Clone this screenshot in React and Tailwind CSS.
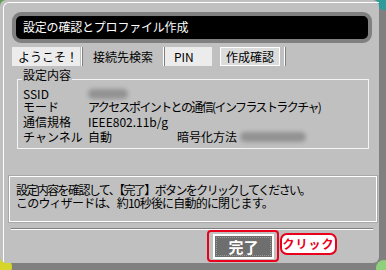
import React from 'react';

const font = "font-['Noto_Sans_CJK_JP','Noto_Sans_CJK_SC',sans-serif]";

const Divider = () => (
  <div className="w-[2px] h-full border-l border-white border-r border-r-[#808080]" />
);

const Blur = ({ w }) => (
  <div className={`h-[10px] ${w} rounded-full bg-[#929292] blur-[2px]`} />
);

export default function App () {
  return (
    <div className={`relative w-[386px] h-[270px] overflow-hidden bg-[#808080] ${font} text-[12px] leading-[12px] text-black`}>
      {/* background bits peeking out at the corners */}
      <div className="absolute -left-[6px] -top-[6px] w-[14px] h-[14px] rounded-full bg-[#5c9e4c]" />
      <div className="absolute -right-[6px] -top-[6px] w-[16px] h-[16px] rounded-full bg-[#2f9c9a]" />
      <div className="absolute -left-[6px] -bottom-[6px] w-[18px] h-[18px] rounded-full bg-[#d6d62a]" />
      <div className="absolute -right-[6px] -bottom-[6px] w-[16px] h-[16px] rounded-full bg-[#8fd07c]" />

      <div className="relative w-[379px] h-[263px] rounded-[6px] bg-[#c0c0c0] pl-[3px] pt-[2px]">
        <div className="h-[260px] border-l border-t border-white rounded-tl-[6px] flex flex-col">
          {/* title bar */}
          <div className="ml-[8px] mt-[9px] w-[360px] h-[31px] rounded-[9px] border-[4px] border-[#808080] bg-black flex items-center pl-[7px]">
            <span className="text-white text-[12px] tracking-[-0.2px]">設定の確認とプロファイル作成</span>
          </div>

          {/* tabs */}
          <div className="ml-[8px] mt-[4px] h-[20px] flex">
            <div className="w-[68px] bg-[#ececec] flex items-center pl-[6px]">ようこそ！</div>
            <div className="w-[1px]" />
            <Divider />
            <div className="w-[1px]" />
            <div className="w-[78px] flex items-center justify-center">接続先検索</div>
            <div className="w-[1px]" />
            <Divider />
            <div className="w-[47px] bg-[#ececec] flex items-center pl-[9px]">PIN</div>
            <div className="w-[8px]" />
            <div className="w-[60px] border border-white bg-[#dcdcdc] flex items-center justify-center">作成確認</div>
            <div className="w-[4px]" />
            <Divider />
          </div>

          {/* settings group */}
          <div className="ml-[13px] mt-[13px] w-[352px] h-[70px] border border-[#f4f4f4]">
            <div className="-mt-[11px] ml-[4px] w-fit px-[1px] h-[12px] bg-[#c0c0c0] flex items-center">設定内容</div>
            <div className="mt-[6px] pl-[5px] flex flex-col">
              <div className="h-[13px] flex items-center">
                <span className="w-[65px]">SSID</span>
                <Blur w="w-[40px]" />
              </div>
              <div className="h-[14px] flex items-center">
                <span className="w-[65px]">モード</span>
                <span className="tracking-[-1.6px]">アクセスポイントとの通信(インフラストラクチャ)</span>
              </div>
              <div className="h-[15px] flex items-center">
                <span className="w-[65px]">通信規格</span>
                <span>IEEE802.11b/g</span>
              </div>
              <div className="h-[16px] flex items-center">
                <span className="w-[65px]">チャンネル</span>
                <span className="w-[89px]">自動</span>
                <span className="w-[63px]">暗号化方法</span>
                <Blur w="w-[66px]" />
              </div>
            </div>
          </div>

          {/* message */}
          <div className="ml-[5px] mt-[27px] w-[368px] h-[47px] border border-white shadow-[0_0_0_1px_#a8a8a8] pl-[6px] pt-[7px] flex flex-col gap-[1px]">
            <div className="h-[12px] tracking-[-1.6px]">設定内容を確認して、【完了】ボタンをクリックしてください。</div>
            <div className="h-[12px] tracking-[-0.8px]">このウィザードは、約10秒後に自動的に閉じます。</div>
          </div>

          {/* separator */}
          <div className="ml-[7px] mt-[6px] w-[362px] border-t border-[#808080] border-b border-b-white" />

          {/* button row */}
          <div className="ml-[203px] flex items-start">
            <div className="w-[72px] h-[32px] rounded-[4px] border-2 border-[#e8001c] pl-[4px] pt-[2px]">
              <div className="w-[61px] h-[25px] border-2 border-white bg-[#6e6e6e] p-[1px]">
                <div className="w-full h-full border border-dotted border-[#9a9a9a] flex items-center justify-center text-white font-bold text-[15px] leading-[15px]">完了</div>
              </div>
            </div>
            <div className="ml-[1px] mt-[3px] w-[57px] h-[22px] rounded-[7px] border-2 border-[#e8001c] bg-white flex items-center justify-center text-[#e8001c] font-bold text-[12px] tracking-[1px]">クリック</div>
          </div>
        </div>
      </div>
    </div>
  );
}
